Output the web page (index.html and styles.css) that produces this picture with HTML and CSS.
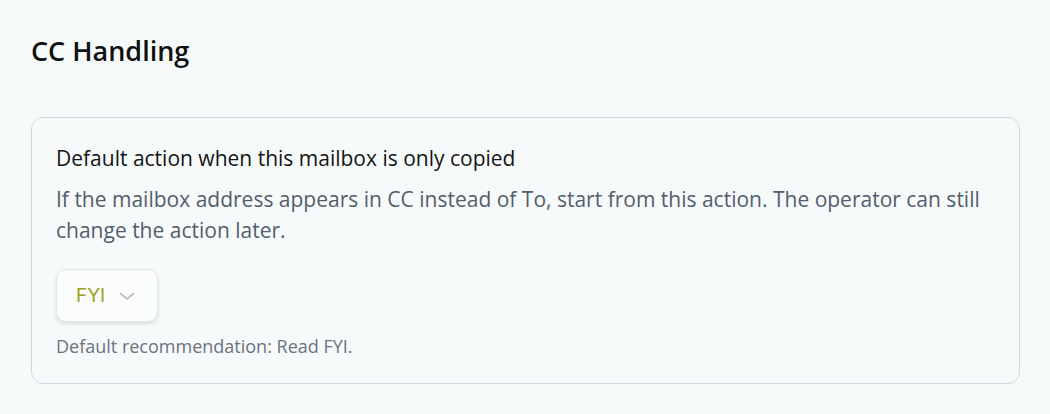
FILE: index.html
```html
<!DOCTYPE html>
<html lang="en">
<head>
    <meta charset="UTF-8">
    <meta name="viewport" content="width=device-width, initial-scale=1.0">
    <title>CC Handling</title>
    <link rel="stylesheet" href="styles.css">
</head>
<body>
    <div class="page">
        <h2 class="section-title">CC Handling</h2>
        <div class="card">
            <div class="field-label">Default action when this mailbox is only copied</div>
            <p class="field-help">
                If the mailbox address appears in CC instead of To, start from this action. The operator can still change the action later.
            </p>
            <button class="select" type="button">
                <span class="select-value">FYI</span>
                <svg class="chevron" width="18" height="18" viewBox="0 0 18 18" fill="none">
                    <path d="M2.5 6.5 L9 12 L15.5 6.5" stroke="#b0b3b5" stroke-width="1.6" stroke-linecap="round" stroke-linejoin="round"/>
                </svg>
            </button>
            <div class="field-hint">Default recommendation: Read FYI.</div>
        </div>
    </div>
</body>
</html>
```

FILE: styles.css
```css
body {
    margin: 0;
    font-family: 'Open Sans', Arial, sans-serif;
    background-color: #f7fafb;
    color: #111;
}
.page {
    padding: 34px 30px 30px 31px;
}
.section-title {
    margin: 0 0 49px 0;
    font-size: 27px;
    font-weight: 600;
    line-height: 34px;
    color: #111;
}
.card {
    border: 1px solid #d3d7db;
    border-radius: 12px;
    padding: 25px 24px 24px 24px;
    background-color: #f7fafb;
}
.field-label {
    font-size: 21px;
    line-height: 30px;
    color: #141414;
}
.field-help {
    margin: 11px 0 23px 0;
    font-size: 21px;
    line-height: 31px;
    color: #535d6b;
}
.select {
    display: flex;
    align-items: center;
    gap: 13px;
    height: 53px;
    padding: 0 21px 0 19px;
    border: 1px solid #e3e6e9;
    border-radius: 10px;
    background-color: #fbfcfd;
    box-shadow: 0 2px 4px rgba(0, 0, 0, 0.12);
    font-family: inherit;
    cursor: pointer;
}
.select-value {
    font-family: 'Inter', sans-serif;
    font-size: 19px;
    color: #9aa21c;
}
.chevron {
    display: block;
}
.field-hint {
    margin-top: 11px;
    font-size: 18px;
    line-height: 26px;
    color: #6b7280;
}
```
